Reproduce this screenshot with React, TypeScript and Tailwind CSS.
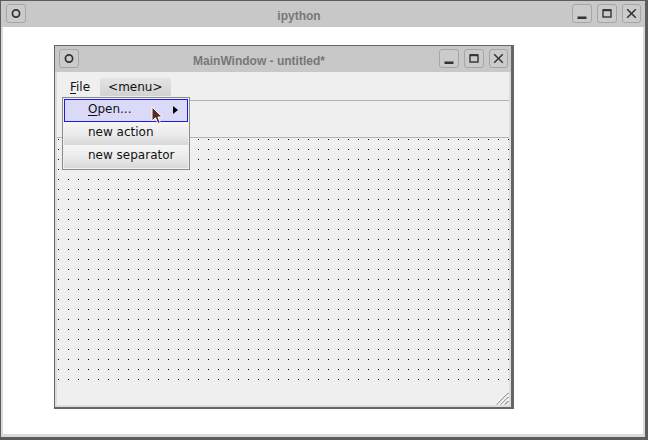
import React from "react";

type BtnKind = "menu" | "min" | "max" | "close";

const TitleButton = ({ kind, w = "w-[20px]" }: { kind: BtnKind; w?: string }) => (
  <div
    className={`${w} h-[19px] rounded-[3px] border border-[#a6a6a6] bg-[#cbcbcb] flex items-center justify-center`}
  >
    <svg width="18" height="17" viewBox="0 0 18 17" className="text-[#333]">
      {kind === "menu" && (
        <circle cx="9" cy="8.5" r="3.6" fill="none" stroke="currentColor" strokeWidth="1.7" />
      )}
      {kind === "min" && <rect x="4.5" y="11.5" width="9" height="2.5" fill="currentColor" />}
      {kind === "max" && (
        <g fill="none" stroke="currentColor">
          <rect x="5" y="5" width="8" height="7" strokeWidth="1.4" />
          <line x1="5" y1="5.2" x2="13" y2="5.2" strokeWidth="2" />
        </g>
      )}
      {kind === "close" && (
        <g stroke="currentColor" strokeWidth="1.6" strokeLinecap="square">
          <line x1="5" y1="4.5" x2="13" y2="12.5" />
          <line x1="13" y1="4.5" x2="5" y2="12.5" />
        </g>
      )}
    </svg>
  </div>
);

const TitleBar = ({ title, pad }: { title: string; pad: string }) => (
  <div className={`h-[26px] shrink-0 bg-[#c8c8c8] flex items-start ${pad}`}>
    <TitleButton kind="menu" />
    <div className="flex-1 text-center text-[12px] font-bold text-[#777] leading-[24px] font-['Liberation_Sans',Arial,sans-serif]">
      {title}
    </div>
    <div className="flex gap-[5px]">
      <TitleButton kind="min" />
      <TitleButton kind="max" />
      <TitleButton kind="close" w="w-[19px]" />
    </div>
  </div>
);

const MenuItem = ({ children, active }: { children: React.ReactNode; active?: boolean }) => (
  <div
    className={`h-[23px] flex items-center whitespace-nowrap pb-[3px] ${
      active
        ? "bg-[#dadaf8] border border-[#1c1ce0] pl-[23px] pr-[9px]"
        : "pl-[24px] pr-[10px] bg-gradient-to-b from-[#f6f6f6] via-[#ececec] to-[#d8d8d8]"
    }`}
  >
    <span className="flex-1">{children}</span>
    {active && (
      <svg width="5" height="8" viewBox="0 0 5 8" className="mt-[2px]">
        <polygon points="0,0 5,4 0,8" fill="#000" />
      </svg>
    )}
  </div>
);

const DotGrid = () => (
  <svg className="block w-full h-full" xmlns="http://www.w3.org/2000/svg">
    <defs>
      <pattern id="dots" width="10" height="10" patternUnits="userSpaceOnUse">
        <rect x="1" y="1" width="1" height="1" fill="#000" />
      </pattern>
    </defs>
    <rect width="100%" height="100%" fill="url(#dots)" />
  </svg>
);

export default function App() {
  return (
    <div className="w-[648px] h-[440px] bg-[#5c5c5c] pt-px pl-px pr-[3px] pb-[3px] font-['DejaVu_Sans',sans-serif]">
      <div className="flex h-full flex-col">
        <TitleBar title="ipython" pad="pt-[3px] pl-[5px] pr-[4px]" />

        <div className="flex-1 bg-white border-l-2 border-r-2 border-b-[3px] border-[#dadada] pl-[51px] pt-[18px]">
          {/* designer form window */}
          <div className="relative w-[460px] h-[364px] flex flex-col border-l border-t border-r-[3px] border-b-2 border-[#666] text-[12px] text-[#111]">
            <TitleBar title="MainWindow - untitled*" pad="pt-[3px] pl-[4px] pr-[3px]" />

            <div className="flex-1 flex flex-col bg-[#efefef] border-l-2 border-r-2 border-b-2 border-[#dcdcdc]">
              {/* menubar */}
              <div className="h-[28px] shrink-0 flex items-start pt-[6px] pl-[6px] gap-[3px]">
                <div className="h-[18px] px-[7px] flex items-center">
                  <span>
                    <span className="underline underline-offset-2">F</span>ile
                  </span>
                </div>
                <div className="h-[18px] px-[8px] flex items-center bg-gradient-to-b from-[#e4e4e4] to-[#d2d2d2]">
                  &lt;menu&gt;
                </div>
              </div>
              <div className="h-px shrink-0 ml-[5px] bg-[#b4b4b4]" />
              {/* toolbar area */}
              <div className="h-[36px] shrink-0" />
              <div className="h-px shrink-0 bg-[#b4b4b4]" />
              {/* central widget */}
              <div className="flex-1">
                <DotGrid />
              </div>
              {/* status bar */}
              <div className="h-[24px] shrink-0 flex items-end justify-end">
                <svg width="13" height="13" viewBox="0 0 13 13">
                  <g strokeWidth="1">
                    <line x1="12.5" y1="1" x2="1" y2="12.5" stroke="#555" />
                    <line x1="12.5" y1="2" x2="2" y2="12.5" stroke="#fff" />
                    <line x1="12.5" y1="5" x2="5" y2="12.5" stroke="#555" />
                    <line x1="12.5" y1="6" x2="6" y2="12.5" stroke="#fff" />
                    <line x1="12.5" y1="9" x2="9" y2="12.5" stroke="#555" />
                  </g>
                </svg>
              </div>
            </div>

            {/* open popup menu */}
            <div className="absolute left-[7px] top-[51px] w-[128px] border border-[#8c8c8c] bg-[#efefef] p-px flex flex-col">
              <MenuItem active>
                <span className="underline underline-offset-2">O</span>pen...
              </MenuItem>
              <MenuItem>new action</MenuItem>
              <MenuItem>new separator</MenuItem>

              <svg
                className="absolute left-[88px] top-[8px]"
                width="13"
                height="20"
                viewBox="0 0 13 20"
              >
                <path
                  d="M1 1 L1 15 L4.5 11.8 L7 17.5 L9.3 16.5 L6.9 11 L11.2 11 Z"
                  fill="#5a2a28"
                  stroke="#fff"
                  strokeWidth="1"
                  strokeLinejoin="round"
                />
              </svg>
            </div>
          </div>
        </div>
      </div>
    </div>
  );
}
